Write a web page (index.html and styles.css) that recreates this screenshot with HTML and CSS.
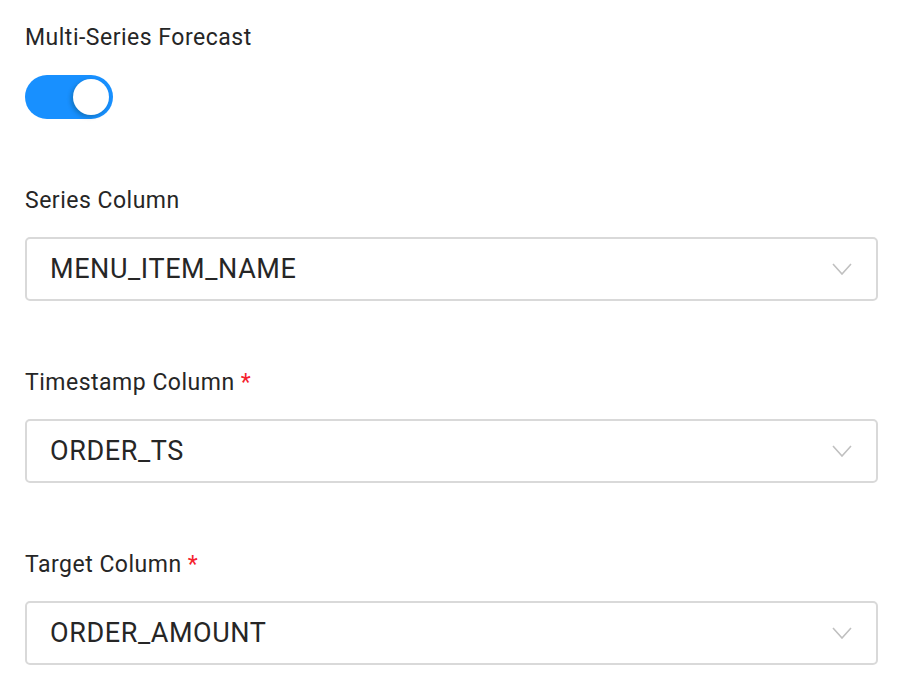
FILE: index.html
```html
<!doctype html>
<html lang="en">
  <head>
    <meta charset="UTF-8" />
    <meta name="viewport" content="width=device-width, initial-scale=1.0" />
    <title>Forecast Settings</title>
    <link rel="stylesheet" href="styles.css">
  </head>
  <body>
    <form class="settings" onsubmit="return false;">
      <div class="field">
        <span class="label">Multi-Series Forecast</span>
        <button type="button" class="switch on" role="switch" aria-checked="true">
          <span class="knob"></span>
        </button>
      </div>

      <div class="field">
        <span class="label">Series Column</span>
        <div class="select">
          <span class="value">MENU_ITEM_NAME</span>
          <svg class="arrow" width="20" height="12" viewBox="0 0 20 12">
            <path d="M1 1 L10 11 L19 1" fill="none" stroke="#c0c0c0" stroke-width="1.6" />
          </svg>
        </div>
      </div>

      <div class="field">
        <span class="label">Timestamp Column <span class="req">*</span></span>
        <div class="select">
          <span class="value">ORDER_TS</span>
          <svg class="arrow" width="20" height="12" viewBox="0 0 20 12">
            <path d="M1 1 L10 11 L19 1" fill="none" stroke="#c0c0c0" stroke-width="1.6" />
          </svg>
        </div>
      </div>

      <div class="field">
        <span class="label">Target Column <span class="req">*</span></span>
        <div class="select">
          <span class="value">ORDER_AMOUNT</span>
          <svg class="arrow" width="20" height="12" viewBox="0 0 20 12">
            <path d="M1 1 L10 11 L19 1" fill="none" stroke="#c0c0c0" stroke-width="1.6" />
          </svg>
        </div>
      </div>
    </form>
  </body>
</html>
```
FILE: styles.css
```css
* {
  box-sizing: border-box;
}

body {
  margin: 0;
  padding: 22px 24px 0 25px;
  font-family: Roboto, "Liberation Sans", Arial, sans-serif;
  color: #262626;
  background: #fff;
}

.settings {
  display: flex;
  flex-direction: column;
  gap: 66px;
}

.field {
  display: flex;
  flex-direction: column;
  align-items: flex-start;
  gap: 20px;
}

.field:first-child {
  gap: 21px;
}

.label {
  font-size: 23px;
  line-height: 32px;
  letter-spacing: 0.5px;
}

.req {
  color: #f5222d;
}

.switch {
  position: relative;
  width: 88px;
  height: 44px;
  padding: 0;
  border: none;
  border-radius: 22px;
  background: #1890ff;
  cursor: pointer;
}

.switch .knob {
  position: absolute;
  top: 4px;
  right: 4px;
  width: 36px;
  height: 36px;
  border-radius: 50%;
  background: #fff;
  box-shadow: -2px 2px 4px rgba(0, 35, 11, 0.25);
}

.select {
  display: flex;
  align-items: center;
  justify-content: space-between;
  width: 100%;
  height: 64px;
  padding: 0 24px 0 23px;
  border: 2px solid #d9d9d9;
  border-radius: 5px;
  background: #fff;
}

.value {
  font-size: 27px;
  letter-spacing: 0.6px;
  color: #262626;
}

.arrow {
  display: block;
}
```
